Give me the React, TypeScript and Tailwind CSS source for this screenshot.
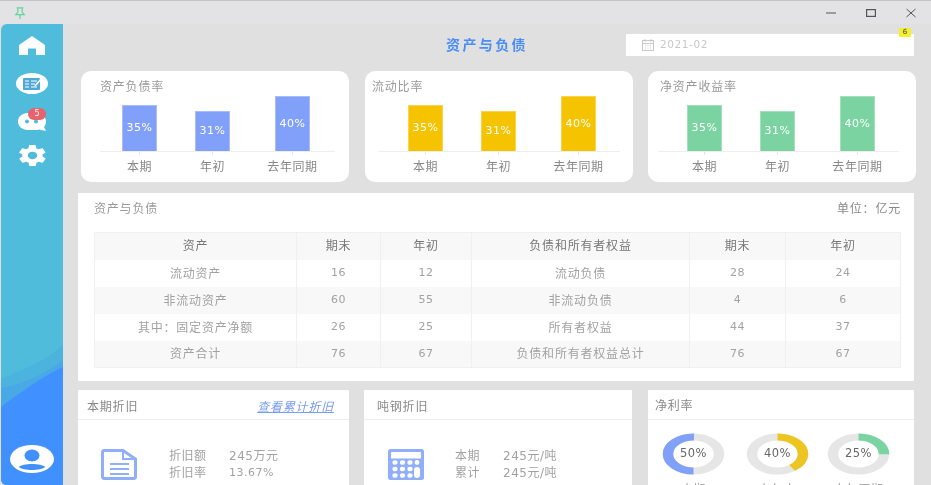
import React from "react";

const FONT = "font-['DejaVu_Sans','Noto_Sans_CJK_SC',sans-serif]";

type Bar = { label: string; value: number; h: number; ml: number };

function barsAt(first: number): Bar[] {
  return [
    { label: "本期", value: 35, h: 46, ml: first },
    { label: "年初", value: 31, h: 40, ml: 38 },
    { label: "去年同期", value: 40, h: 55, ml: 45 },
  ];
}

function ChartCard({
  title,
  color,
  titleLeft,
  axisLeft,
  axisWidth,
  first,
  barWidth,
}: {
  title: string;
  color: string;
  titleLeft: string;
  axisLeft: string;
  axisWidth: string;
  first: number;
  barWidth: number;
}) {
  const bars = barsAt(first);
  return (
    <div className="w-[268px] h-[111px] bg-white rounded-[10px] overflow-hidden">
      <div className={`${titleLeft} pt-[8px] h-[25px] text-[12px] tracking-[0.8px] leading-[16px] text-[#999]`}>{title}</div>
      <div className={axisLeft}>
        <div className={`${axisWidth} h-[55px] flex items-end border-b border-[#eeeeee]`}>
          {bars.map((b) => (
            <div
              key={b.label}
              className={`${color} border border-white/30 border-b-0 flex items-center justify-center text-[11px] tracking-[0.5px] text-white`}
              style={{ marginLeft: b.ml, width: barWidth, height: b.h }}
            >
              {b.value}%
            </div>
          ))}
        </div>
        <div className="flex">
          {bars.map((b) => (
            <div key={b.label} className="flex flex-col items-center" style={{ marginLeft: b.ml, width: barWidth }}>
              <div className="w-px h-[3px] bg-[#e4e4e4]" />
              <div className="mt-[4px] text-[12px] tracking-[0.6px] leading-[16px] whitespace-nowrap text-[#888]">{b.label}</div>
            </div>
          ))}
        </div>
      </div>
    </div>
  );
}

function Donut({ value, color, label, ccw }: { value: number; color: string; label: string; ccw?: boolean }) {
  const c = 2 * Math.PI * 17;
  return (
    <div className="w-[63px] flex flex-col items-center">
      <div className="relative w-[63px] h-[42px]">
        <svg viewBox="0 0 42 42" preserveAspectRatio="none" className="w-full h-full">
          <circle cx="21" cy="21" r="17" fill="none" stroke="#e6e6e6" strokeWidth="7" />
          <circle
            cx="21"
            cy="21"
            r="17"
            fill="none"
            stroke={color}
            strokeWidth="7"
            strokeDasharray={`${(c * value) / 100} ${c}`}
            transform={ccw ? "rotate(90 21 21)" : "rotate(-90 21 21)"}
          />
        </svg>
        <div className="absolute inset-0 flex items-center justify-center text-[11.5px] tracking-[0.4px] text-[#666]">
          {value}%
        </div>
      </div>
      <div className="mt-[7px] text-[12px] tracking-[0.6px] leading-[16px] whitespace-nowrap text-[#999]">{label}</div>
    </div>
  );
}

const rows = [
  ["流动资产", "16", "12", "流动负债", "28", "24"],
  ["非流动资产", "60", "55", "非流动负债", "4", "6"],
  ["其中：固定资产净额", "26", "25", "所有者权益", "44", "37"],
  ["资产合计", "76", "67", "负债和所有者权益总计", "76", "67"],
];

export default function App() {
  return (
    <div className={`w-full h-screen overflow-hidden flex flex-col bg-[#e0e0e0] ${FONT} blur-[0.5px]`}>
      {/* title bar */}
      <div className="h-[24px] shrink-0 bg-[#e3e3e5] border-t border-[#c4c4c4] flex items-center">
        <svg viewBox="0 0 14 14" className="ml-[14px] w-[12px] h-[12px]" fill="none" stroke="#5fd69a" strokeWidth="1.4">
          <path d="M3 1h8M4.5 1v5L2 9h10L9.5 6V1M7 9v5" />
        </svg>
        <div className="ml-auto flex items-center text-[#555]">
          <svg viewBox="0 0 10 10" className="w-[10px] h-[10px] mr-[30px]" stroke="currentColor" strokeWidth="1">
            <path d="M0 5h10" />
          </svg>
          <svg viewBox="0 0 10 10" className="w-[10px] h-[10px] mr-[30px]" fill="none" stroke="currentColor" strokeWidth="1.2">
            <rect x="0.6" y="1.6" width="8.8" height="6.8" />
          </svg>
          <svg viewBox="0 0 10 10" className="w-[10px] h-[10px] mr-[15px]" stroke="currentColor" strokeWidth="1">
            <path d="M0.5 1l9 8M9.5 1l-9 8" />
          </svg>
        </div>
      </div>

      <div className="flex-1 flex min-h-0">
        {/* sidebar */}
        <div className="relative ml-px w-[62px] shrink-0 rounded-tl-[6px] rounded-bl-[6px] overflow-hidden bg-[#4fbcdc] flex flex-col items-center">
          <svg viewBox="0 0 62 145" preserveAspectRatio="none" className="absolute left-0 bottom-0 w-[62px] h-[145px]">
            <path d="M0 39C20 30 44 22 62 5V145H0Z" fill="#4cb3de" />
            <path d="M0 48C22 44 44 34 62 20V145H0Z" fill="#49a8e6" />
            <path d="M0 67C20 52 42 36 62 27V145H0Z" fill="#4090ff" />
          </svg>

          <svg viewBox="0 0 26 19" className="relative mt-[12px] w-[26px] h-[19px]" fill="#fff">
            <path d="M13 0L26 9V19H17V12.5H9V19H0V9Z" />
          </svg>

          <svg viewBox="0 0 32 21" className="relative mt-[18px] w-[32px] h-[21px]">
            <ellipse cx="16" cy="10.5" rx="16" ry="10.5" fill="#fff" />
            <rect x="7" y="5" width="17" height="12" rx="1" fill="#4fa9d8" />
            <path d="M9 8h4M9 11h4M9 14h4M15 8h6M15 11h4M15 14h6" stroke="#fff" strokeWidth="1" />
            <path d="M19 13l6-7" stroke="#fff" strokeWidth="1.6" />
          </svg>

          <div className="relative mt-[14px] w-[32px] h-[26px]">
            <svg viewBox="0 0 28 18" className="absolute left-[2px] top-[5px] w-[28px] h-[18px]">
              <path d="M10 0H18C24 0 28 4 28 8.5C28 11 27 13 26 14L28 18L21 16.5C20 17 19 17 18 17H10C4 17 0 13 0 8.5C0 4 4 0 10 0Z" fill="#fff" />
              <circle cx="9" cy="8.5" r="2" fill="#4fbcdc" />
              <circle cx="18" cy="8.5" r="2" fill="#4fbcdc" />
            </svg>
            <div className="absolute left-[12px] top-0 w-[18px] h-[12px] rounded-full bg-[#e8636b] text-white text-[8px] leading-[12px] text-center">
              5
            </div>
          </div>

          <svg viewBox="2 2 20 20" preserveAspectRatio="none" className="relative mt-[11px] w-[27px] h-[21px]" fill="#fff">
            <path d="M19.4 13c.1-.3.1-.7.1-1s0-.7-.1-1l2.1-1.6c.2-.2.2-.4.1-.6l-2-3.5c-.1-.2-.4-.3-.6-.2l-2.5 1c-.5-.4-1.1-.7-1.7-1l-.4-2.6c0-.3-.2-.5-.5-.5h-4c-.3 0-.5.2-.5.4l-.4 2.7c-.6.2-1.2.6-1.7 1l-2.5-1c-.2-.1-.5 0-.6.2l-2 3.5c-.1.2-.1.5.1.6L4.5 11c0 .3-.1.7-.1 1s0 .7.1 1l-2.1 1.6c-.2.2-.2.4-.1.6l2 3.5c.1.2.4.3.6.2l2.5-1c.5.4 1.1.7 1.7 1l.4 2.6c0 .2.2.4.5.4h4c.3 0 .5-.2.5-.4l.4-2.6c.6-.3 1.2-.6 1.7-1l2.5 1c.2.1.5 0 .6-.2l2-3.5c.1-.2.1-.5-.1-.6L19.4 13zM12 15.5c-1.9 0-3.5-1.6-3.5-3.5s1.6-3.5 3.5-3.5 3.5 1.6 3.5 3.5-1.6 3.5-3.5 3.5z" />
          </svg>

          <svg viewBox="0 0 44 28" className="relative mt-auto mb-[12px] w-[44px] h-[28px]">
            <ellipse cx="22" cy="14" rx="22" ry="14" fill="#fff" />
            <ellipse cx="22" cy="10.5" rx="7.5" ry="6" fill="#4090ff" />
            <path d="M9 22C12 18 32 18 35 22C32 26 12 26 9 22Z" fill="#4090ff" />
          </svg>
        </div>

        {/* main */}
        <div className="flex-1 min-w-0 flex flex-col">
          <div className="h-[47px] shrink-0 pt-[10px] flex items-start">
            <div className="ml-[383px] h-[22px] leading-[22px] text-[14px] font-bold tracking-[2.4px] whitespace-nowrap text-[#4a8ff5]">
              资产与负债
            </div>
            <div className="relative ml-auto mr-[17px] w-[288px] h-[22px] bg-white flex items-center pl-[16px]">
              <svg viewBox="0 0 12 12" className="w-[12px] h-[12px]" fill="none" stroke="#c4c4c4" strokeWidth="0.9">
                <rect x="0.5" y="1.5" width="11" height="10" />
                <path d="M0.5 4.5h11M3 0v3M9 0v3M3 6.5h1M5.5 6.5h1M8 6.5h1M3 9h1M5.5 9h1M8 9h1" />
              </svg>
              <span className="ml-[6px] text-[10.5px] tracking-[0.6px] text-[#c8c8c8]">2021-02</span>
              <div className="absolute right-[3px] -top-[6px] w-[12px] h-[9px] rounded-[1px] bg-[#f5ef2e] text-[7px] leading-[9px] text-center text-[#444]">
                6
              </div>
            </div>
          </div>

          <div className="flex pl-[18px]">
            <ChartCard title="资产负债率" color="bg-[#80a0fa]" titleLeft="pl-[19px]" axisLeft="pl-[19px] pt-px" axisWidth="w-[235px]" first={22} barWidth={35} />
            <div className="ml-[16px]">
              <ChartCard title="流动比率" color="bg-[#f6c300]" titleLeft="pl-[7px]" axisLeft="pl-[14px] pt-px" axisWidth="w-[241px]" first={29} barWidth={35} />
            </div>
            <div className="ml-[15px]">
              <ChartCard title="净资产收益率" color="bg-[#7bd3a2]" titleLeft="pl-[12px]" axisLeft="pl-[10px] pt-px" axisWidth="w-[241px]" first={29} barWidth={35} />
            </div>
          </div>

          {/* table card */}
          <div className="mt-[11px] ml-[15px] w-[836px] h-[188px] shrink-0 bg-white px-[16px]">
            <div className="h-[39px] pt-[8px] flex justify-between text-[12px] tracking-[0.8px] leading-[16px] text-[#999]">
              <span>资产与负债</span>
              <span className="-mr-[3px] text-[#888]">单位：亿元</span>
            </div>
            <table className="w-[806px] table-fixed border-collapse border border-[#f0f0f0] text-center text-[#a2a2a2]">
              <colgroup>
                <col className="w-[202px]" />
                <col className="w-[84px]" />
                <col className="w-[91px]" />
                <col className="w-[218px]" />
                <col className="w-[96px]" />
                <col className="w-[115px]" />
              </colgroup>
              <thead>
                <tr className="h-[27px] bg-[#f8f8f8] text-[#777]">
                  {["资产", "期末", "年初", "负债和所有者权益", "期末", "年初"].map((h, i) => (
                    <th key={i} className="border-x border-[#f0f0f0] font-normal text-[12px] tracking-[0.8px]">
                      {h}
                    </th>
                  ))}
                </tr>
              </thead>
              <tbody>
                {rows.map((r, i) => (
                  <tr key={i} className={`h-[27px] ${i % 2 ? "bg-[#f8f8f8]" : "bg-white"}`}>
                    {r.map((c, j) => (
                      <td
                        key={j}
                        className={`border-x border-[#f0f0f0] pt-px ${j % 3 === 0 ? "text-[12px] tracking-[0.8px]" : "text-[11px] tracking-[0.4px]"}`}
                      >
                        {c}
                      </td>
                    ))}
                  </tr>
                ))}
              </tbody>
            </table>
          </div>

          {/* bottom row */}
          <div className="mt-[9px] ml-[15px] flex">
            <div className="w-[271px] h-[120px] bg-white">
              <div className="h-[30px] border-b border-[#eeeeee] pl-[9px] pr-[15px] pt-[5px] flex items-center justify-between text-[12px] tracking-[0.8px] text-[#888]">
                <span>本期折旧</span>
                <span className="italic underline text-[#7b9df0]">查看累计折旧</span>
              </div>
              <div className="flex pt-[29px] pl-[23px]">
                <svg viewBox="0 0 36 31" className="w-[36px] h-[31px]" fill="none" stroke="#90aefa">
                  <path d="M3 1.5H22L34.5 10V28a1.5 1.5 0 0 1-1.5 1.5H3A1.5 1.5 0 0 1 1.5 28V3A1.5 1.5 0 0 1 3 1.5Z" strokeWidth="3" />
                  <path d="M22 1.5V10H34.5" strokeWidth="2" />
                  <path d="M9 15H28M9 20H28M9 25H28" strokeWidth="2" />
                </svg>
                <div className="ml-[32px] -mt-[1px] grid grid-cols-[60px_auto] text-[12px] tracking-[0.5px] leading-[16.5px] text-[#a2a2a2]">
                  <span>折旧额</span>
                  <span>245万元</span>
                  <span>折旧率</span>
                  <span className="text-[11px]">13.67%</span>
                </div>
              </div>
            </div>

            <div className="ml-[15px] w-[268px] h-[120px] bg-white">
              <div className="h-[30px] border-b border-[#eeeeee] pl-[13px] pt-[5px] flex items-center text-[12px] tracking-[0.8px] text-[#888]">
                吨钢折旧
              </div>
              <div className="flex pt-[29px] pl-[24px]">
                <svg viewBox="0 0 36 31" className="w-[36px] h-[31px]">
                  <rect width="36" height="31" rx="2.5" fill="#90aefa" />
                  <rect x="3" y="3" width="30" height="6.5" rx="0.5" fill="#fff" />
                  {[7, 14.5, 22].map((x) =>
                    [13.5, 20, 26.5].map((y) => <ellipse key={`${x}-${y}`} cx={x} cy={y} rx="2.6" ry="2.3" fill="#fff" />),
                  )}
                  <circle cx="29" cy="13.5" r="2.4" fill="#fff" />
                  <rect x="26" y="18" width="6" height="11" rx="3" fill="#fff" />
                </svg>
                <div className="ml-[31px] -mt-[1px] grid grid-cols-[48px_auto] text-[12px] tracking-[0.5px] leading-[16.5px] text-[#a2a2a2]">
                  <span>本期</span>
                  <span>245元/吨</span>
                  <span>累计</span>
                  <span>245元/吨</span>
                </div>
              </div>
            </div>

            <div className="ml-[16px] w-[266px] h-[120px] bg-white">
              <div className="h-[30px] border-b border-[#eeeeee] pl-[7px] pt-[2px] flex items-center text-[12px] tracking-[0.8px] text-[#888]">
                净利率
              </div>
              <div className="flex pt-[13px] pl-[14px]">
                <Donut value={50} color="#80a0fa" label="本期" ccw />
                <div className="ml-[21px]">
                  <Donut value={40} color="#ecc520" label="上年末" />
                </div>
                <div className="ml-[18px]">
                  <Donut value={25} color="#7bd3a2" label="去年同期" />
                </div>
              </div>
            </div>
          </div>
        </div>
      </div>
    </div>
  );
}
